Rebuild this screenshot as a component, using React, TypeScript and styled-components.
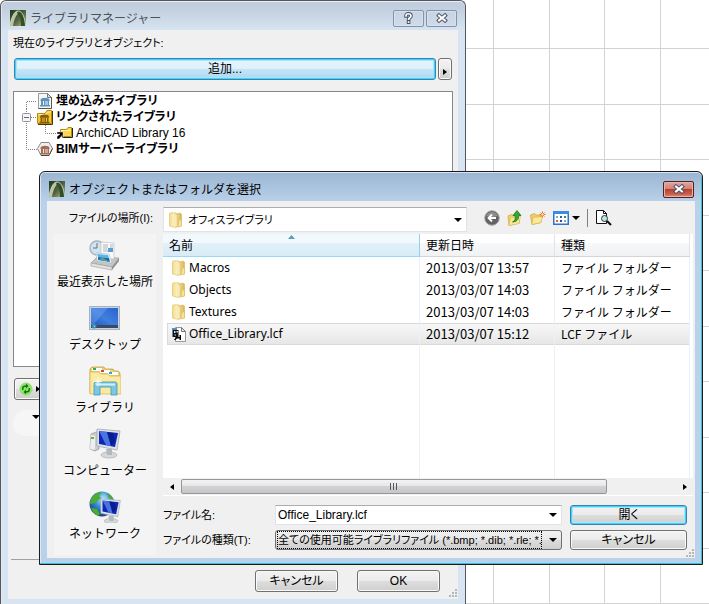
import React from "react";
import styled, { createGlobalStyle, css } from "styled-components";

const GlobalStyle = createGlobalStyle`
  *, *::before, *::after { box-sizing: border-box; }
  body {
    margin: 0;
    background: #fff;
    color: #000;
    font-family: "Noto Sans CJK JP", "Liberation Sans", sans-serif;
    font-size: 12px;
    line-height: 16px;
  }
  button, input, select { font: inherit; color: inherit; margin: 0; }
  svg { display: block; flex: none; }
`;

const uiText = css`
  font-family: "Liberation Sans", "Noto Sans CJK JP", sans-serif;
  font-size: 12px;
  line-height: 16px;
  font-feature-settings: "palt";
`;

const labelText = css`
  ${uiText}
  font-size: 11px;
`;

const Desktop = styled.div`
  position: relative;
  min-height: 100vh;
  overflow: hidden;
`;

const Canvas = styled.svg`
  position: absolute;
  inset: 0;
  width: 100%;
  height: 100%;
`;

const ManagerWindow = styled.section`
  position: relative;
  display: flex;
  flex-direction: column;
  width: calc(100% - 243px);
  min-width: 420px;
  min-height: 100vh;
  padding: 0 7px 5px;
  border: solid #57565c;
  border-width: 1px 1px 0;
  border-radius: 6px 6px 0 0;
  background: linear-gradient(#c0cedd, #c0cedd 6px, #d7e4f1 30px);
  box-shadow: inset 0 1px #e8eff6, inset 1px 0 #dfe9f4;
`;

const TitleBar = styled.header`
  display: flex;
  align-items: center;
  height: 29px;
  gap: 4px;
  padding: 5px 1px 0 2px;
`;

const Title = styled.h1<{ $muted?: boolean }>`
  flex: 1;
  margin: 0;
  font-size: 12px;
  font-weight: 400;
  line-height: 16px;
  color: ${(p) => (p.$muted ? "#4d5359" : "#000")};
`;

const CaptionButtons = styled.div`
  display: flex;
  gap: 2px;
`;

const CaptionButton = styled.button<{ $danger?: boolean }>`
  display: grid;
  place-items: center;
  width: 31px;
  height: 17px;
  padding: 0;
  border: 1px solid ${(p) => (p.$danger ? "#571e1c" : "#8292b0")};
  border-radius: 2px;
  background: ${(p) =>
    p.$danger
      ? "linear-gradient(#e0a79f, #cf8077 47%, #b8402c 50%, #c85f4b 80%, #d88d80)"
      : "linear-gradient(#c6d3e2, #cfdbe8)"};
  box-shadow: inset 0 0 0 1px ${(p) => (p.$danger ? "#e6b3ac" : "#d6e1ed")};
`;

const ManagerBody = styled.div`
  flex: 1;
  display: flex;
  flex-direction: column;
  background: #f0f0f0;
`;

const Heading = styled.p`
  ${labelText}
  margin: 0;
  padding: 5px 5px 7px;
`;

const AddRow = styled.div`
  display: flex;
  gap: 2px;
  padding: 0 6px 11px;
`;

const PushButton = styled.button<{ $tone?: "hot" | "default" }>`
  ${uiText}
  display: flex;
  align-items: center;
  justify-content: center;
  height: 22px;
  padding: 0 3px;
  white-space: nowrap;
  border: 1px solid ${(p) => (p.$tone ? "#3c7fb1" : "#707070")};
  border-radius: 3px;
  background: ${(p) =>
    p.$tone === "hot"
      ? "linear-gradient(#e5f4fc, #def1fb 48%, #c4e5f6 52%, #a9d9f2)"
      : "linear-gradient(#f3f3f3, #ebebeb 48%, #dddddd 52%, #cfcfcf)"};
  box-shadow: ${(p) =>
    p.$tone ? "inset 0 0 0 1px #3fd4fb, inset 0 0 0 2px #a5e7fa" : "inset 0 0 0 1px #fafafa"};
`;

const AddButton = styled(PushButton)`
  flex: 1;
`;

const FlyoutButton = styled(PushButton)`
  width: 14px;
  padding-top: 6px;
`;

const TreePanel = styled.div`
  flex: 1;
  min-height: 120px;
  margin: 0 5px;
  padding: 1px 0;
  border: 1px solid #828790;
  background: #fff;
`;

const TreeList = styled.ul`
  list-style: none;
  margin: 0;
  padding: 0;
`;

const TreeRow = styled.div<{ $leaf?: boolean }>`
  ${uiText}
  display: flex;
  align-items: center;
  height: 16px;
  gap: 3px;
  font-weight: ${(p) => (p.$leaf ? 400 : 700)};
`;

const TreeLead = styled.span`
  display: flex;
`;

const RefreshRow = styled.div`
  padding: 11px 6px 0;
`;

const RefreshButton = styled(PushButton)`
  justify-content: flex-start;
  width: 34px;
  gap: 2px;
`;

const Pill = styled.div`
  display: flex;
  justify-content: flex-end;
  width: 200px;
  height: 26px;
  margin: 10px 5px 0;
  padding: 5px 173px 0 0;
  border-radius: 13px;
  background: #f6f6f6;
`;

const ManagerFooter = styled.footer`
  display: flex;
  justify-content: flex-end;
  gap: 19px;
  margin: 123px 3px 0;
  padding: 10px 15px 7px 0;
  border-top: 1px solid #a0a0a0;
`;

const FooterButton = styled(PushButton)`
  width: 83px;
`;

const Grip = styled.svg`
  position: absolute;
  right: 8px;
  bottom: 7px;
`;

const FileDialog = styled.section`
  position: absolute;
  top: 171px;
  left: 39px;
  right: 6px;
  padding: 0 7px 6px;
  border: 1px solid #1b1b1b;
  border-radius: 6px 6px 0 0;
  background: linear-gradient(#9bb5d2, #b9d1ea 30px);
  box-shadow: inset 0 1px #d9e6f3, inset -1px -1px #35c0dc, inset 1px 0 #dce8f5;
`;

const DialogBody = styled.div`
  display: grid;
  grid-template-columns: 102px minmax(0, 1fr);
  column-gap: 7px;
  padding: 6px 2px 3px 7px;
  background: #f0f0f0;
`;

const LocationLabel = styled.label`
  ${labelText}
  justify-self: end;
  padding: 3px 3px 0 0;
  white-space: nowrap;
`;

const LocationBar = styled.div`
  display: flex;
  align-items: center;
  height: 25px;
  margin-bottom: 2px;
`;

const Combo = styled.div<{ $raised?: boolean }>`
  display: flex;
  align-items: center;
  min-width: 0;
  padding: 1px 4px 1px 2px;
  border: 1px solid ${(p) => (p.$raised ? "#707070" : "#e2e3ea")};
  border-top-color: ${(p) => (p.$raised ? "#707070" : "#abadb3")};
  border-radius: ${(p) => (p.$raised ? 3 : 0)}px;
  background: ${(p) =>
    p.$raised ? "linear-gradient(#f1f1f1, #e8e8e8 48%, #dcdcdc 52%, #cfcfcf)" : "#fff"};
`;

const LocationCombo = styled(Combo)`
  max-width: 304px;
  flex: 1;
  height: 25px;
  padding-left: 4px;
  gap: 4px;
`;

const Picker = styled.select<{ $focus?: boolean }>`
  ${labelText}
  appearance: none;
  flex: 1;
  min-width: 0;
  width: 100%;
  height: 16px;
  padding: 0;
  overflow: hidden;
  border: 0;
  background: transparent;
  outline: ${(p) => (p.$focus ? "1px dotted #000" : "none")};
  margin-right: ${(p) => (p.$focus ? 8 : 0)}px;
`;

const NameInput = styled.input`
  ${uiText}
  flex: 1;
  min-width: 0;
  height: 16px;
  padding: 0;
  border: 0;
  outline: 0;
  background: transparent;
`;

const Tools = styled.div`
  display: flex;
  align-items: center;
  gap: 7px;
  padding: 0 0 4px 17px;
`;

const ToolButton = styled.button<{ $divided?: boolean }>`
  display: flex;
  align-items: center;
  gap: 3px;
  height: 18px;
  padding: 0 0 0 ${(p) => (p.$divided ? 7 : 0)}px;
  border: 0;
  border-left: ${(p) => (p.$divided ? "1px solid #808080" : "0")};
  background: none;
`;

const Places = styled.nav`
  display: flex;
  flex-direction: column;
  grid-row: span 2;
  gap: 8px;
  padding: 5px 0 9px;
  background: #f4f4f4;
`;

const Place = styled.button`
  display: flex;
  flex-direction: column;
  align-items: center;
  gap: 2px;
  height: 55px;
  padding: 0;
  border: 0;
  background: none;
  white-space: nowrap;
`;

const ListView = styled.div`
  min-width: 0;
  background: #fff;
`;

const FileTable = styled.table`
  width: 100%;
  height: 244px;
  table-layout: fixed;
  border-collapse: separate;
  border-spacing: 0;
`;

const Column = styled.col<{ $width?: number }>`
  width: ${(p) => (p.$width ? `${p.$width}px` : "auto")};
`;

const Head = styled.th<{ $sorted?: boolean }>`
  position: relative;
  height: 23px;
  padding: 0 6px 1px;
  text-align: left;
  font-weight: 400;
  border-right: 1px solid ${(p) => (p.$sorted ? "#8fd3f2" : "#e0e3e8")};
  border-bottom: 1px solid ${(p) => (p.$sorted ? "#96d9f9" : "#d5d5d5")};
  background: ${(p) =>
    p.$sorted
      ? "linear-gradient(#f2f9fc 40%, #e1f1f9 42%, #d8ecf6)"
      : "linear-gradient(#fff 40%, #f7f8fa 42%, #f1f2f4)"};
`;

const SortMark = styled.svg`
  position: absolute;
  top: 1px;
  left: 50%;
  margin-left: -3px;
`;

const Cell = styled.td`
  height: 22px;
  padding: 0 6px;
  white-space: nowrap;
  overflow: hidden;
  border-right: 1px solid #e9f2fb;

  &:first-child {
    padding-left: 4px;
    border-left: 4px solid transparent;
    background-clip: padding-box;
  }
`;

const FileRow = styled.tr<{ $selected?: boolean }>`
  ${(p) =>
    p.$selected &&
    css`
      ${Cell} {
        background-image: linear-gradient(#f8f8f8, #e6e6e6);
        box-shadow: inset 0 1px #d9d9d9, inset 0 -1px #d9d9d9;
      }
      ${Cell}:first-child {
        box-shadow: inset 1px 1px #d9d9d9, inset 0 -1px #d9d9d9;
      }
    `}
`;

const FillerRow = styled.tr`
  height: 100%;
`;

const FileName = styled.span`
  display: flex;
  align-items: center;
  gap: 2px;
  font-family: "Noto Sans", "Noto Sans CJK JP", sans-serif;
`;

const DateText = styled.time`
  font-size: 13px;
`;

const ScrollBar = styled.div`
  display: flex;
  align-items: center;
  height: 17px;
  background: #f0f0f0;
`;

const ScrollArrow = styled.button`
  display: grid;
  place-items: center;
  width: 17px;
  height: 17px;
  padding: 0;
  border: 0;
  background: none;
`;

const ScrollTrack = styled.div`
  flex: 1;
  padding-left: 1px;
`;

const ScrollThumb = styled.div`
  display: grid;
  place-items: center;
  width: 86%;
  height: 15px;
  border: 1px solid #979797;
  border-radius: 2px;
  background: linear-gradient(#f4f4f4, #e6e6e6 45%, #d2d2d5 50%, #c6c6ca);
`;

const FormGrid = styled.form`
  display: grid;
  grid-template-columns: 112px minmax(0, 1fr) 117px;
  grid-auto-rows: 21px;
  row-gap: 4px;
  align-items: center;
  padding: 8px 6px 4px 0;
`;

const FieldLabel = styled.label`
  ${labelText}
  white-space: nowrap;
`;

const FieldCombo = styled(Combo)`
  height: 20px;
  margin-right: 8px;
`;

const DialogButton = styled(PushButton)`
  height: 20px;
`;

const LogoIcon = () => (
  <svg width="16" height="16" viewBox="0 0 16 16">
    <defs>
      <linearGradient id="logoBg" x1="0" x2="1" y1="0" y2="1">
        <stop offset="0" stopColor="#1f3a1c" />
        <stop offset=".55" stopColor="#556242" />
        <stop offset="1" stopColor="#b9bd95" />
      </linearGradient>
    </defs>
    <rect width="16" height="16" fill="url(#logoBg)" />
    <path d="M0 16C1 9 4 1 8 1l2 1C6 4 4 10 3 16z" fill="#b9c6a6" />
    <path d="M8 1c5 0 7 8 7.500 15H11c0-5-.5-10-4-13z" fill="#2f4f24" />
    <path d="M0 15C1.500 8 4 1 8 1c5 0 7 8 7.500 15" fill="none" stroke="#dfe5d2" strokeWidth=".8" />
  </svg>
);

const CrossIcon = () => (
  <svg width="12" height="10" viewBox="0 0 12 10">
    <path d="M3 2.500l6 5M9 2.500l-6 5" stroke="#4b5467" strokeWidth="4" strokeLinecap="square" />
    <path d="M3 2.500l6 5M9 2.500l-6 5" stroke="#fff" strokeWidth="2" strokeLinecap="square" />
  </svg>
);

const HelpIcon = () => (
  <svg width="9" height="12" viewBox="0 0 9 12" fill="none">
    <path d="M2 4c0-3 5-3 5 0 0 1.800-2.400 1.600-2.400 3.200M4.600 10v.2" stroke="#4b5467" strokeWidth="3.600" strokeLinecap="square" />
    <path d="M2 4c0-3 5-3 5 0 0 1.800-2.400 1.600-2.400 3.200M4.600 10v.2" stroke="#fff" strokeWidth="1.700" strokeLinecap="square" />
  </svg>
);

const RightArrow = () => (
  <svg width="4" height="6" viewBox="0 0 4 6"><path d="M0 0l4 3-4 3z" /></svg>
);
const LeftArrow = () => (
  <svg width="4" height="6" viewBox="0 0 4 6"><path d="M4 0L0 3l4 3z" /></svg>
);
const DownArrow = () => (
  <svg width="8" height="4" viewBox="0 0 8 4"><path d="M0 0h8L4 4z" /></svg>
);
const GripIcon = () => (
  <Grip width="9" height="9" viewBox="0 0 9 9" fill="#b8b8b8">
    <path d="M7 1h2v2H7zM4 4h2v2H4zM7 4h2v2H7zM1 7h2v2H1zM4 7h2v2H4zM7 7h2v2H7z" />
  </Grip>
);

const Temple = ({ color }: { color: string }) => (
  <g fill={color}>
    <path d="M3.500 7c0-3 9-3 9 0v1h-9z" />
    <path d="M4 8h2v4H4zM7 8h1v4H7zM8.500 8h1v4h-1zM10.500 8h1.500v4h-1.500z" />
    <path d="M3 12h10v1.500H3z" />
  </g>
);

const EmbeddedIcon = () => (
  <svg width="16" height="16" viewBox="0 0 16 16">
    <path d="M1.500.5h9l4 4v11h-13z" fill="#f6f6f6" stroke="#9a9a9a" />
    <path d="M10.500.5v4h4z" fill="#d4e0ea" stroke="#777" />
    <path d="M14.500 4.500v11h-13" fill="none" stroke="#555" />
    <Temple color="#5b93bb" />
  </svg>
);
const LinkedIcon = () => (
  <svg width="16" height="16" viewBox="0 0 16 16">
    <path d="M.5 4.500h7.500l2-3h4.500v13H.5z" fill="#f0c838" stroke="#b48a10" />
    <path d="M1.500 5.500h7l2-2.500h3.500" fill="none" stroke="#fff0a0" />
    <path d="M1 15.500h14.500V2" fill="none" stroke="#4a3a00" />
    <g transform="translate(-.5 .7)"><Temple color="#8a5c08" /></g>
  </svg>
);
const ServerIcon = () => (
  <svg width="16" height="16" viewBox="0 0 16 16">
    <path d="M4 1.500h8l3.500 6-3.500 7H4L.5 7.500z" fill="#efefef" stroke="#8a8a8a" />
    <path d="M4 14.500h8l3.500-7" stroke="#444" fill="none" />
    <Temple color="#a56c52" />
  </svg>
);
const LinkFolderIcon = () => (
  <svg width="16" height="16" viewBox="0 0 16 16">
    <path d="M3.500 4.500h6l1.500-2h3.500v9h-11z" fill="#f8d650" stroke="#b48a10" />
    <path d="M4 5.500h10" stroke="#fff3b0" />
    <path d="M15.500 3v9.500H5" fill="none" stroke="#222" />
    <path d="M0 7h6v6H5v-2.500L2 14H0v-2.500L3 9H0z" fill="#000" stroke="#fff" strokeWidth=".4" />
  </svg>
);

const dotted = { stroke: "#808080", strokeDasharray: "1 1", fill: "none" };
const BranchTop = () => (
  <svg width="23" height="16" viewBox="0 0 23 16"><path d="M12.500 16V8.500H23" {...dotted} /></svg>
);
const BranchOpen = () => (
  <svg width="23" height="16" viewBox="0 0 23 16">
    <path d="M12.500 0v16M17 8.500h6" {...dotted} />
    <rect x="8.500" y="4.500" width="8" height="8" rx="1" fill="#f5f5f5" stroke="#919191" />
    <path d="M10 8.500h5" stroke="#4b63a7" />
  </svg>
);
const BranchChild = () => (
  <svg width="43" height="16" viewBox="0 0 43 16">
    <path d="M12.500 0v16M31.500 0v8.500H43" {...dotted} />
  </svg>
);
const BranchEnd = () => (
  <svg width="23" height="16" viewBox="0 0 23 16"><path d="M12.500 0v8.500H23" {...dotted} /></svg>
);

const RefreshIcon = () => (
  <svg width="16" height="16" viewBox="0 0 16 16">
    <circle cx="8" cy="8" r="6.500" fill="#94e06c" />
    <path d="M4.700 9V7.500q0-2.500 3.300-2.500M11.300 7v1.500q0 2.500-3.300 2.500" fill="none" stroke="#087a12" strokeWidth="1.400" />
    <path d="M8 2.500L10.500 5 8 7.500zM8 8.500L5.500 11 8 13.500z" fill="#087a12" />
  </svg>
);

const FolderIcon = () => (
  <svg width="16" height="16" viewBox="0 0 16 16">
    <defs>
      <linearGradient id="folderFill" x1="0" x2="1">
        <stop offset="0" stopColor="#f3dc8a" />
        <stop offset=".6" stopColor="#fbf0bd" />
        <stop offset="1" stopColor="#e6c766" />
      </linearGradient>
      <linearGradient id="folderSide" x1="0" x2="1">
        <stop offset="0" stopColor="#f9eab0" />
        <stop offset="1" stopColor="#d9b552" />
      </linearGradient>
    </defs>
    <path d="M6 2.500l6-1.500 1.500 1v12L8 15z" fill="url(#folderSide)" stroke="#d6b355" strokeWidth=".6" />
    <path d="M11 8.500l2.500-1V14L10 15z" fill="#f6e29a" stroke="#d6b355" strokeWidth=".4" />
    <path d="M1.500 1.500L3 .8h4.500l1.500 1.700v12L7.500 15.500l-6-1.500z" fill="url(#folderFill)" stroke="#dcbd66" strokeWidth=".6" />
    <path d="M8 3v11.500" stroke="#fffbe6" />
  </svg>
);

const LcfIcon = () => (
  <svg width="16" height="16" viewBox="0 0 16 16">
    <path d="M4.500 1.500h6l4 4v10h-10z" fill="#fdfdfd" stroke="#999" />
    <path d="M10.500 1.500v4h4z" fill="#e4e4e4" stroke="#777" />
    <path d="M1 2h5v2H3v7H1z" fill="#5f8dab" />
    <path d="M2 4h5.500v7H2z" fill="#111" />
    <path d="M3 5h1.500v2H3zM5.500 5H7v1.500H5.500zM3.500 8.500H5v1H3.500z" fill="#cfe0ea" />
    <path d="M3 14l2-3h3.500V9H10v5H8.500v-1.500H6L4.500 14z" fill="#000" />
  </svg>
);

const BackIcon = () => (
  <svg width="16" height="16" viewBox="0 0 16 16">
    <circle cx="8" cy="8" r="7.300" fill="#626262" stroke="#aaa" />
    <path d="M2 6a6.500 6.500 0 0 1 12 0q-6 2-12 0z" fill="#8d8d8d" />
    <path d="M12 8H4.500M8 4.500L4.500 8 8 11.500" fill="none" stroke="#fff" strokeWidth="1.800" />
  </svg>
);
const UpIcon = () => (
  <svg width="16" height="16" viewBox="0 0 16 16">
    <path d="M1 6l3.500-1.500 2 1 6-1v8.500L2 15.500z" fill="#efd268" stroke="#c9a33b" strokeWidth=".7" />
    <path d="M3.500 8l10-2L12 13.500l-10 2z" fill="#fbe99a" stroke="#d4b24e" strokeWidth=".5" />
    <path d="M5.500 12C8 11 8.500 9 8.200 5.500H6L10 .5l4 5h-2.500c.5 4-2 6.500-6 6.500z" fill="#35a931" stroke="#167016" strokeWidth=".7" />
  </svg>
);
const NewFolderIcon = () => (
  <svg width="16" height="16" viewBox="0 0 16 16">
    <path d="M.5 5l4-1.500L6 5h5v7.500L2 14.500z" fill="#efcf65" stroke="#c9a33b" strokeWidth=".7" />
    <path d="M3 7.500l9.500-1-1.500 6-9 2z" fill="#fbe99a" stroke="#d4b24e" strokeWidth=".6" />
    <path d="M12.500 1.500v6M9.500 4.500h6M10.500 2.500l4 4M14.500 2.500l-4 4" stroke="#f06a34" />
    <circle cx="12.500" cy="4.500" r="1.200" fill="#ffe0a0" />
  </svg>
);
const ViewIcon = () => (
  <svg width="16" height="16" viewBox="0 0 16 16">
    <rect x=".75" y="1.750" width="14.500" height="12.500" fill="#fff" stroke="#2b74d0" strokeWidth="1.500" />
    <path d="M0 1h16v3H0z" fill="#3b8ae4" />
    <path d="M3 6h2v2H3zM11 10h2v2h-2z" fill="#94a4c0" />
    <path d="M7 6h2v2H7z" fill="#2a5cb8" />
    <path d="M11 6h2v2h-2z" fill="#2b9448" />
    <path d="M3 10h2v2H3z" fill="#d8653b" />
    <path d="M7 10h2v2H7z" fill="#304a9a" />
  </svg>
);
const PreviewIcon = () => (
  <svg width="17" height="17" viewBox="0 0 17 17">
    <path d="M1.500 1.500h7l3 3v10h-10z" fill="#fff" stroke="#111" />
    <path d="M8.500 1.500v3h3" fill="none" stroke="#111" />
    <circle cx="9.500" cy="9.500" r="3" fill="#b9e8ea" stroke="#333" />
    <path d="M12 12l4 4" stroke="#111" strokeWidth="2" />
  </svg>
);

const RecentIcon = () => (
  <svg width="32" height="32" viewBox="0 0 32 32">
    <path d="M2 24l6-6 22 1-7 9z" fill="#c3c6c6" stroke="#999" strokeWidth=".6" />
    <path d="M2 24l21 4v3L2 27z" fill="#e2e4e4" stroke="#999" strokeWidth=".6" />
    <path d="M23 28l7-9v3l-7 9z" fill="#8d9191" />
    <circle cx="8" cy="9" r="7" fill="#d3e2eb" stroke="#a3b5c0" strokeWidth="1.400" />
    <path d="M8 4v5H4" fill="none" stroke="#5b7585" />
    <path d="M12 3l13 1v16H12z" fill="#fafafa" stroke="#bbb" strokeWidth=".6" />
    <path d="M14 6h5M14 8h5M14 10h4M21 6h3M21 8h3M14 12h9" stroke="#a9b4c0" />
    <path d="M19 9h5v4h-5z" fill="#5b9fd0" />
    <path d="M7 14l13 1 3 9-15-2z" fill="#f8fbfd" stroke="#a0b4c4" strokeWidth=".6" />
    <path d="M8 15l11 1 1 3-11-1z" fill="#58b4ea" />
    <path d="M9 18l11 1 1 4-12-2z" fill="#1769b8" />
    <path d="M9 20l5-1 7 4z" fill="#5cab75" />
  </svg>
);
const DesktopIcon = () => (
  <svg width="32" height="32" viewBox="0 0 32 32">
    <defs>
      <linearGradient id="deskFill" x1="0" x2="1" y1="1" y2="0">
        <stop offset="0" stopColor="#1b4fb5" />
        <stop offset=".5" stopColor="#3f80df" />
        <stop offset="1" stopColor="#2a62cd" />
      </linearGradient>
    </defs>
    <rect x=".5" y="4.500" width="30" height="23" fill="#c8d2e2" stroke="#a6b1c2" />
    <rect x="2" y="6" width="27" height="20" fill="url(#deskFill)" />
    <path d="M2 6h17L4 23H2z" fill="#6fa4ec" opacity=".45" />
    <path d="M2 23h27v3H2z" fill="#3b4a60" />
    <circle cx="5" cy="24" r="2.500" fill="#2a8dbd" />
    <path d="M4 23h1v1H4z" fill="#f5742e" />
    <path d="M5 24h1v1H5z" fill="#f6d548" />
  </svg>
);
const LibraryIcon = () => (
  <svg width="32" height="32" viewBox="0 0 32 32">
    <path d="M1 4l2-2h12l1 2h8l1 2h4l2 2v20H1z" fill="#ecd076" stroke="#bb973a" strokeWidth=".7" />
    <path d="M3 3h10v3H3z" fill="#fff" /><path d="M4 3h3v2H4z" fill="#2bb04a" />
    <path d="M11 5h10v3H11z" fill="#fff" /><path d="M12 5h3v2h-3z" fill="#d8482e" />
    <path d="M19 7h10v3H19z" fill="#fff" /><path d="M20 7h3v2h-3z" fill="#3b9ad8" />
    <path d="M1 7h9l2 2h7l2 2h11v18H1z" fill="#f9ea9f" stroke="#c9a94b" strokeWidth=".6" />
    <path d="M5 19q0-2 2-2h19q2 0 2 2v11h-6v-8H11v8H5z" fill="#7ec6e4" stroke="#4597b8" strokeWidth=".8" />
    <path d="M7 18.500h19v2H7z" fill="#d3f0fa" />
    <path d="M9 12v9M5 16.500h8M6 13.500l6 6M12 13.500l-6 6" stroke="#fff" strokeWidth=".8" />
  </svg>
);
const Monitor = () => (
  <>
    <ellipse cx="20" cy="27" rx="8" ry="3" fill="#d5d8da" stroke="#a0a4a8" strokeWidth=".6" />
    <path d="M17 21h6v6h-5z" fill="#b4b9bd" />
    <path d="M8 1l23 2-3 19-20-4z" fill="#dfe3e8" stroke="#9aa1aa" strokeWidth=".7" />
    <path d="M10 3l19 2-3 14-16-3z" fill="#0c28b4" />
    <path d="M10 3l8 1 4 14-5-1z" fill="#5d8cf0" opacity=".75" />
    <path d="M18 4l6 1 2 8-4 5z" fill="#071a80" opacity=".7" />
  </>
);
const ComputerIcon = () => (
  <svg width="32" height="32" viewBox="0 0 32 32">
    <path d="M2 6l8-3v18l-4 2-5-2z" fill="#c9cdd0" stroke="#8e9296" strokeWidth=".7" />
    <path d="M2 7l4 1v14l-5-1z" fill="#eceeef" />
    <path d="M2 9h3v2H2z" fill="#61b829" />
    <Monitor />
  </svg>
);
const NetworkIcon = () => (
  <svg width="32" height="32" viewBox="0 0 32 32">
    <defs>
      <radialGradient id="globe" cx=".55" cy=".3" r=".7">
        <stop offset="0" stopColor="#b8ebff" />
        <stop offset=".5" stopColor="#368bd0" />
        <stop offset="1" stopColor="#11447e" />
      </radialGradient>
    </defs>
    <circle cx="13" cy="13" r="12.500" fill="url(#globe)" />
    <path d="M3 6q4-5 10-5l-3 4 2 2-6 5-5 1q0-4 2-7zM2 17l6 1 3 5-2 2q-5-2-7-8zM17 2q6 2 8 7l-5-2z" fill="#4cab35" />
    <g transform="translate(5 7) scale(.85)"><Monitor /></g>
  </svg>
);

const columns = ["名前", "更新日時", "種類"];

const files = [
  { name: "Macros", date: "2013/03/07 13:57", kind: "ファイル フォルダー", icon: <FolderIcon /> },
  { name: "Objects", date: "2013/03/07 14:03", kind: "ファイル フォルダー", icon: <FolderIcon /> },
  { name: "Textures", date: "2013/03/07 14:03", kind: "ファイル フォルダー", icon: <FolderIcon /> },
  { name: "Office_Library.lcf", date: "2013/03/07 15:12", kind: "LCF ファイル", icon: <LcfIcon />, selected: true },
];

const places = [
  { label: "最近表示した場所", icon: <RecentIcon /> },
  { label: "デスクトップ", icon: <DesktopIcon /> },
  { label: "ライブラリ", icon: <LibraryIcon /> },
  { label: "コンピューター", icon: <ComputerIcon /> },
  { label: "ネットワーク", icon: <NetworkIcon /> },
];

const gridRows = [48, 104, 159, 215, 270, 326, 381, 437, 492, 548, 603];
const gridColumns = [493, 549, 604, 660];

const LibraryTree = () => (
  <TreePanel>
    <TreeList>
      <li>
        <TreeRow><TreeLead><BranchTop /><EmbeddedIcon /></TreeLead>埋め込みライブラリ</TreeRow>
      </li>
      <li>
        <TreeRow><TreeLead><BranchOpen /><LinkedIcon /></TreeLead>リンクされたライブラリ</TreeRow>
        <TreeList>
          <li>
            <TreeRow $leaf><TreeLead><BranchChild /><LinkFolderIcon /></TreeLead>ArchiCAD Library 16</TreeRow>
          </li>
        </TreeList>
      </li>
      <li>
        <TreeRow><TreeLead><BranchEnd /><ServerIcon /></TreeLead>BIMサーバーライブラリ</TreeRow>
      </li>
    </TreeList>
  </TreePanel>
);

const FileList = () => (
  <ListView>
    <FileTable>
      <colgroup>
        <Column />
        <Column $width={135} />
        <Column $width={135} />
        <Column $width={3} />
      </colgroup>
      <thead>
        <tr>
          {columns.map((name, i) => (
            <Head key={name} $sorted={i === 0}>
              {name}
              {i === 0 && (
                <SortMark width="7" height="4" viewBox="0 0 7 4"><path d="M0 4l3.500-4L7 4z" fill="#5f9cba" /></SortMark>
              )}
            </Head>
          ))}
          <td />
        </tr>
      </thead>
      <tbody>
        {files.map((f) => (
          <FileRow key={f.name} $selected={f.selected}>
            <Cell><FileName>{f.icon}{f.name}</FileName></Cell>
            <Cell><DateText>{f.date}</DateText></Cell>
            <Cell>{f.kind}</Cell>
            <td />
          </FileRow>
        ))}
        <FillerRow><Cell /><Cell /><Cell /><td /></FillerRow>
      </tbody>
    </FileTable>
    <ScrollBar>
      <ScrollArrow aria-label="左へスクロール"><LeftArrow /></ScrollArrow>
      <ScrollTrack>
        <ScrollThumb>
          <svg width="9" height="7" viewBox="0 0 9 7"><path d="M1.500 0v7M4.500 0v7M7.500 0v7" stroke="#55585c" /></svg>
        </ScrollThumb>
      </ScrollTrack>
      <ScrollArrow aria-label="右へスクロール"><RightArrow /></ScrollArrow>
    </ScrollBar>
  </ListView>
);

export default function App() {
  return (
    <Desktop>
      <GlobalStyle />
      <Canvas stroke="#d3d3d3">
        {gridRows.map((y) => <line key={y} x1="0" x2="100%" y1={y + 0.5} y2={y + 0.5} />)}
        {gridColumns.map((x) => <line key={x} y1="0" y2="100%" x1={x + 0.5} x2={x + 0.5} />)}
      </Canvas>

      <ManagerWindow>
        <TitleBar>
          <LogoIcon />
          <Title $muted>ライブラリマネージャー</Title>
          <CaptionButtons>
            <CaptionButton aria-label="ヘルプ"><HelpIcon /></CaptionButton>
            <CaptionButton aria-label="閉じる"><CrossIcon /></CaptionButton>
          </CaptionButtons>
        </TitleBar>
        <ManagerBody>
          <Heading>現在のライブラリとオブジェクト:</Heading>
          <AddRow>
            <AddButton $tone="hot">追加...</AddButton>
            <FlyoutButton aria-label="追加オプション"><RightArrow /></FlyoutButton>
          </AddRow>
          <LibraryTree />
          <RefreshRow>
            <RefreshButton aria-label="再読み込み"><RefreshIcon /><RightArrow /></RefreshButton>
          </RefreshRow>
          <Pill><DownArrow /></Pill>
          <ManagerFooter>
            <FooterButton>キャンセル</FooterButton>
            <FooterButton>OK</FooterButton>
          </ManagerFooter>
        </ManagerBody>
        <GripIcon />
      </ManagerWindow>

      <FileDialog>
        <TitleBar>
          <LogoIcon />
          <Title as="h2">オブジェクトまたはフォルダを選択</Title>
          <CaptionButton $danger aria-label="閉じる"><CrossIcon /></CaptionButton>
        </TitleBar>
        <DialogBody>
          <LocationLabel htmlFor="location">ファイルの場所(I):</LocationLabel>
          <LocationBar>
            <LocationCombo>
              <FolderIcon />
              <Picker id="location"><option>オフィスライブラリ</option></Picker>
              <DownArrow />
            </LocationCombo>
            <Tools>
              <ToolButton aria-label="戻る"><BackIcon /></ToolButton>
              <ToolButton aria-label="上へ"><UpIcon /></ToolButton>
              <ToolButton aria-label="新しいフォルダー"><NewFolderIcon /></ToolButton>
              <ToolButton aria-label="表示"><ViewIcon /><DownArrow /></ToolButton>
              <ToolButton $divided aria-label="プレビュー"><PreviewIcon /></ToolButton>
            </Tools>
          </LocationBar>
          <Places>
            {places.map((p) => <Place key={p.label}>{p.icon}{p.label}</Place>)}
          </Places>
          <FileList />
          <FormGrid onSubmit={(e) => e.preventDefault()}>
            <FieldLabel htmlFor="fileName">ファイル名:</FieldLabel>
            <FieldCombo>
              <NameInput id="fileName" defaultValue="Office_Library.lcf" />
              <DownArrow />
            </FieldCombo>
            <DialogButton $tone="default">開く</DialogButton>
            <FieldLabel htmlFor="fileKind">ファイルの種類(T):</FieldLabel>
            <FieldCombo $raised>
              <Picker id="fileKind" $focus>
                <option>全ての使用可能ライブラリファイル (*.bmp; *.dib; *.rle; *.jpg; *.gif)</option>
              </Picker>
              <DownArrow />
            </FieldCombo>
            <DialogButton type="button">キャンセル</DialogButton>
          </FormGrid>
        </DialogBody>
        <GripIcon />
      </FileDialog>
    </Desktop>
  );
}
